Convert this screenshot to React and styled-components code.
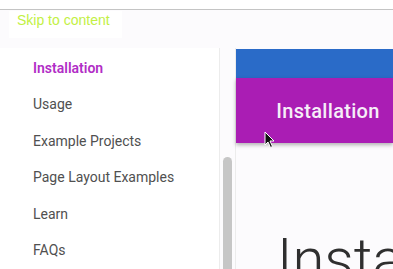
import React from "react";
import styled, { createGlobalStyle } from "styled-components";

const GlobalStyle = createGlobalStyle`
  html, body {
    margin: 0;
    padding: 0;
    background: #fcfbfd;
    font-family: Roboto, "Liberation Sans", sans-serif;
    overflow: hidden;
  }
`;

const items = [
  "Installation",
  "Usage",
  "Example Projects",
  "Page Layout Examples",
  "Learn",
  "FAQs",
];

function App() {
  return (
    <>
      <GlobalStyle />
      <Page>
        <TopLine />
        <SkipBar>
          <SkipLink href="#">Skip to content</SkipLink>
        </SkipBar>
        <Body>
          <Sidebar>
            {items.map((item, i) => (
              <NavItem key={item} active={i === 0}>
                {item}
              </NavItem>
            ))}
          </Sidebar>
          <Gutter>
            <Thumb />
          </Gutter>
          <Main>
            <BlueBar />
            <Hero>
              Installation
              <Cursor viewBox="0 0 12 18">
                <path
                  d="M1 1 L1 14 L4 11 L6.5 16.5 L8.5 15.5 L6 10 L10 10 Z"
                  fill="#111"
                  stroke="#fff"
                  strokeWidth="1"
                />
              </Cursor>
            </Hero>
            <Title>Installation</Title>
          </Main>
        </Body>
      </Page>
    </>
  );
}

export default App;

const Page = styled.div`
  width: 393px;
  height: 269px;
  overflow: hidden;
  display: flex;
  flex-direction: column;
`;

const TopLine = styled.div`
  height: 9px;
  background: #fff;
  border-bottom: 1px solid #c4c4c4;
  flex-shrink: 0;
`;

const SkipBar = styled.div`
  height: 38px;
  padding-left: 9px;
  flex-shrink: 0;
`;

const SkipLink = styled.a`
  display: inline-block;
  width: 113px;
  height: 27px;
  box-sizing: border-box;
  padding: 1px 0 0 8px;
  background: #ffffff;
  color: #c2f044;
  font-family: "Liberation Sans", Arial, sans-serif;
  font-size: 14px;
  text-decoration: none;
`;

const Body = styled.div`
  flex: 1;
  display: flex;
  min-height: 0;
`;

const Sidebar = styled.nav`
  width: 219px;
  background: #fff;
  border-right: 1px solid #ececec;
  padding-top: 10px;
  flex-shrink: 0;
`;

const NavItem = styled.div`
  height: 36.4px;
  line-height: 20px;
  padding-left: 33px;
  font-size: 14px;
  color: ${(p) => (p.active ? "#b12ec6" : "#505050")};
  font-weight: ${(p) => (p.active ? 600 : 400)};
`;

const Gutter = styled.div`
  width: 15px;
  flex-shrink: 0;
  position: relative;
`;

const Thumb = styled.div`
  position: absolute;
  left: 3px;
  top: 109px;
  width: 9px;
  height: 200px;
  border-radius: 5px;
  background: #c6c6c6;
`;

const Main = styled.main`
  flex: 1;
  border-left: 1px solid #ececec;
  min-width: 0;
`;

const BlueBar = styled.div`
  height: 29px;
  background: #2a6bc8;
  margin-top: 1px;
`;

const Hero = styled.div`
  position: relative;
  height: 65px;
  background: #aa1db4;
  color: #f6eef8;
  font-size: 20px;
  font-weight: 500;
  letter-spacing: 0.3px;
  display: flex;
  align-items: center;
  justify-content: center;
  padding-left: 27px;
  box-shadow: 0 2px 4px rgba(0, 0, 0, 0.3);
`;

const Cursor = styled.svg`
  position: absolute;
  left: 28px;
  top: 53px;
  width: 12px;
  height: 18px;
`;

const Title = styled.h1`
  margin: 87px 0 0 41px;
  font-size: 58px;
  font-weight: 300;
  color: #2f2f2f;
  white-space: nowrap;
  line-height: 1;
`;
